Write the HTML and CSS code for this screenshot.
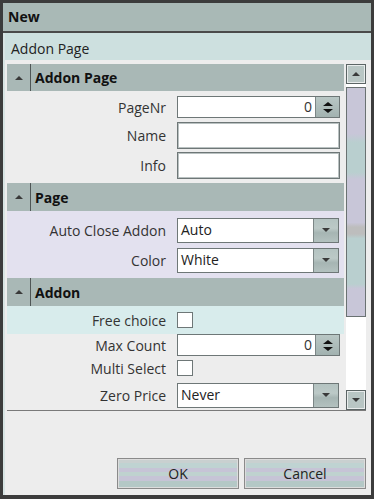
FILE: index.html
```html
<!DOCTYPE html>
<html>
	<head>
		<title>New</title>
		<link rel="stylesheet" href="styles.css">
	</head>
	<body>
		<div class="window">
			<div class="titlebar">New</div>
			<div class="content">
				<div class="page-title">Addon Page</div>
				<div class="grid">
					<div class="grid-body">
						<div class="cat-head h27"><span class="expander"><span class="tri-up"></span></span><span class="cat-name">Addon Page</span></div>
						<div class="section s-page">
							<div class="row h26">
								<span class="label">PageNr</span>
								<div class="spin"><span class="num">0</span><span class="spin-btns"><span class="tri-up dark"></span><span class="tri-down dark"></span></span></div>
							</div>
							<div class="row h31">
								<span class="label">Name</span>
								<div class="textbox"></div>
							</div>
							<div class="row h28">
								<span class="label">Info</span>
								<div class="textbox"></div>
							</div>
						</div>

						<div class="cat-head h28"><span class="expander"><span class="tri-up"></span></span><span class="cat-name">Page</span></div>
						<div class="section s-look lavender">
							<div class="row h36">
								<span class="label">Auto Close Addon</span>
								<div class="combo"><span class="combo-text">Auto</span><span class="combo-btn"><span class="tri-down"></span></span></div>
							</div>
							<div class="row h24">
								<span class="label">Color</span>
								<div class="combo"><span class="combo-text">White</span><span class="combo-btn"><span class="tri-down"></span></span></div>
							</div>
						</div>

						<div class="cat-head h28"><span class="expander"><span class="tri-up"></span></span><span class="cat-name">Addon</span></div>
						<div class="section">
							<div class="row h28 teal">
								<span class="label">Free choice</span>
								<span class="check"></span>
							</div>
							<div class="row h22">
								<span class="label">Max Count</span>
								<div class="spin"><span class="num">0</span><span class="spin-btns"><span class="tri-up dark"></span><span class="tri-down dark"></span></span></div>
							</div>
							<div class="row h24">
								<span class="label">Multi Select</span>
								<span class="check"></span>
							</div>
							<div class="row h30">
								<span class="label">Zero Price</span>
								<div class="combo"><span class="combo-text">Never</span><span class="combo-btn"><span class="tri-down"></span></span></div>
							</div>
						</div>
					</div>
					<div class="scrollbar">
						<div class="sb-btn"><span class="tri-up"></span></div>
						<div class="sb-track">
							<div class="sb-thumb"></div>
						</div>
						<div class="sb-btn"><span class="tri-down"></span></div>
					</div>
				</div>
				<div class="footer">
					<button class="btn">OK</button>
					<button class="btn">Cancel</button>
				</div>
			</div>
		</div>
	</body>
</html>
```

FILE: styles.css
```css
* {
	box-sizing: border-box;
}
html,body {
	width: 100%;
	height: 100%;
}
body {
	margin: 0;
	background-color: #3a3a3a;
	font-family: "Open Sans", "Noto Sans", sans-serif;
	font-size: 14px;
	color: #2a2a2a;
}
.window {
	width: 374px;
	height: 499px;
	border: 3px solid #3c3c3c;
	border-bottom-width: 4px;
	background-color: #ededed;
	display: flex;
	flex-direction: column;
}
.titlebar {
	height: 30px;
	background-color: #a9b9b6;
	border-bottom: 2px solid #4a4a4a;
	font-weight: bold;
	color: #111;
	padding-left: 5px;
	line-height: 27px;
}
.content {
	flex: 1;
	display: flex;
	flex-direction: column;
	border-left: 2px solid #d7e4e3;
}
.page-title {
	height: 27px;
	background-color: #cde0df;
	padding-left: 6px;
	line-height: 32px;
	color: #222;
}
.grid {
	display: flex;
	margin: 4px 5px 0 2px;
	height: 347px;
	border-bottom: 1px solid #7a7a7a;
}
.grid-body {
	flex: 1;
	display: flex;
	flex-direction: column;
}
.section {
	flex: none;
}
.s-page {
	padding: 3px 0 4px;
}
.s-look {
	padding: 1px 0 6px;
}
.cat-head {
	flex: none;
	background-color: #a9b8b6;
	display: flex;
	align-items: center;
}
.expander {
	width: 24px;
	height: 100%;
	border-right: 1px solid #4f5656;
	display: flex;
	align-items: center;
	justify-content: center;
}
.cat-name {
	padding-left: 4px;
	font-weight: bold;
	color: #111;
}
.tri-up, .tri-down {
	width: 0;
	height: 0;
	border-left: 4px solid transparent;
	border-right: 4px solid transparent;
}
.tri-up {
	border-bottom: 4px solid #3a3a3a;
}
.tri-down {
	border-top: 4px solid #3a3a3a;
}
.tri-up.dark {
	border-bottom-color: #111;
	border-left-width: 5px;
	border-right-width: 5px;
}
.tri-down.dark {
	border-top-color: #111;
	border-left-width: 5px;
	border-right-width: 5px;
}
.row {
	display: flex;
	align-items: center;
}
.h22 { height: 22px; }
.h24 { height: 24px; }
.h26 { height: 26px; }
.h27 { height: 27px; }
.h28 { height: 28px; }
.h30 { height: 30px; }
.h31 { height: 31px; }
.h36 { height: 36px; }
.label {
	width: 170px;
	text-align: right;
	padding-right: 11px;
	color: #333;
}
.lavender {
	background-color: #e3e1ef;
}
.teal {
	background-color: #d8ecec;
}
.textbox {
	width: 163px;
	height: 27px;
	background-color: #fff;
	border: 1px solid #6e7777;
	box-shadow: inset 0 0 0 1px #b9c1c1;
}
.spin {
	width: 163px;
	height: 22px;
	background-color: #fff;
	border: 1px solid #6e7777;
	display: flex;
}
.num {
	flex: 1;
	text-align: right;
	padding-right: 3px;
	line-height: 20px;
	color: #333;
}
.spin-btns {
	width: 24px;
	background: linear-gradient(#b9c7c5, #a2b2b0);
	border-left: 1px solid #7c8686;
	display: flex;
	flex-direction: column;
	align-items: center;
	justify-content: center;
	gap: 3px;
}
.combo {
	width: 162px;
	height: 25px;
	background-color: #fff;
	border: 1px solid #6e7777;
	display: flex;
}
.combo-text {
	flex: 1;
	padding-left: 3px;
	line-height: 22px;
	color: #222;
}
.combo-btn {
	width: 25px;
	background: linear-gradient(#b4c3c1 0%, #bcc9c7 40%, #a6b5b3 60%, #b3c1bf 100%);
	border-left: 1px solid #7c8686;
	display: flex;
	align-items: center;
	justify-content: center;
}
.check {
	width: 16px;
	height: 16px;
	background-color: #fff;
	border: 1px solid #6e7777;
}
.scrollbar {
	width: 20px;
	margin-left: 2px;
	display: flex;
	flex-direction: column;
}
.sb-btn {
	height: 20px;
	flex: none;
	border: 1px solid #5c6565;
	box-shadow: inset 0 0 0 1px #e9ecec;
	background-color: #b9c6c4;
	display: flex;
	align-items: center;
	justify-content: center;
}
.sb-track {
	flex: 1;
	background-color: #ffffff;
	padding: 3px 0 66px;
}
.sb-thumb {
	height: 230px;
	border: 1px solid #6a7272;
	background: linear-gradient(#c8c6d8 0%, #c8c6d8 20%, #b9cfcf 24%, #b9cfcf 37%, #c8c6d8 40%, #c8c6d8 59%, #bdbdbd 61%, #bdbdbd 64%, #b9cfcf 66%, #b9cfcf 86%, #c8c6d8 88%, #c8c6d8 100%);
}
.footer {
	flex: 1;
	display: flex;
	justify-content: flex-end;
	align-items: flex-end;
	gap: 5px;
	padding: 0 5px 6px 0;
}
.btn {
	width: 122px;
	height: 31px;
	font-family: inherit;
	font-size: 14px;
	color: #222;
	border: 1px solid #8a8a8a;
	box-shadow: inset 0 0 0 1px #dcdcdc;
	background: linear-gradient(#c9d0d0 0%, #c9d0d0 15%, #bfd3d2 15%, #bfd3d2 30%, #c6c4d6 30%, #c6c4d6 45%, #bfd2cf 45%, #bfd2cf 60%, #c6c4d6 60%, #c6c4d6 75%, #b4c8c6 75%, #b4c8c6 100%);
	padding: 0;
}
```
